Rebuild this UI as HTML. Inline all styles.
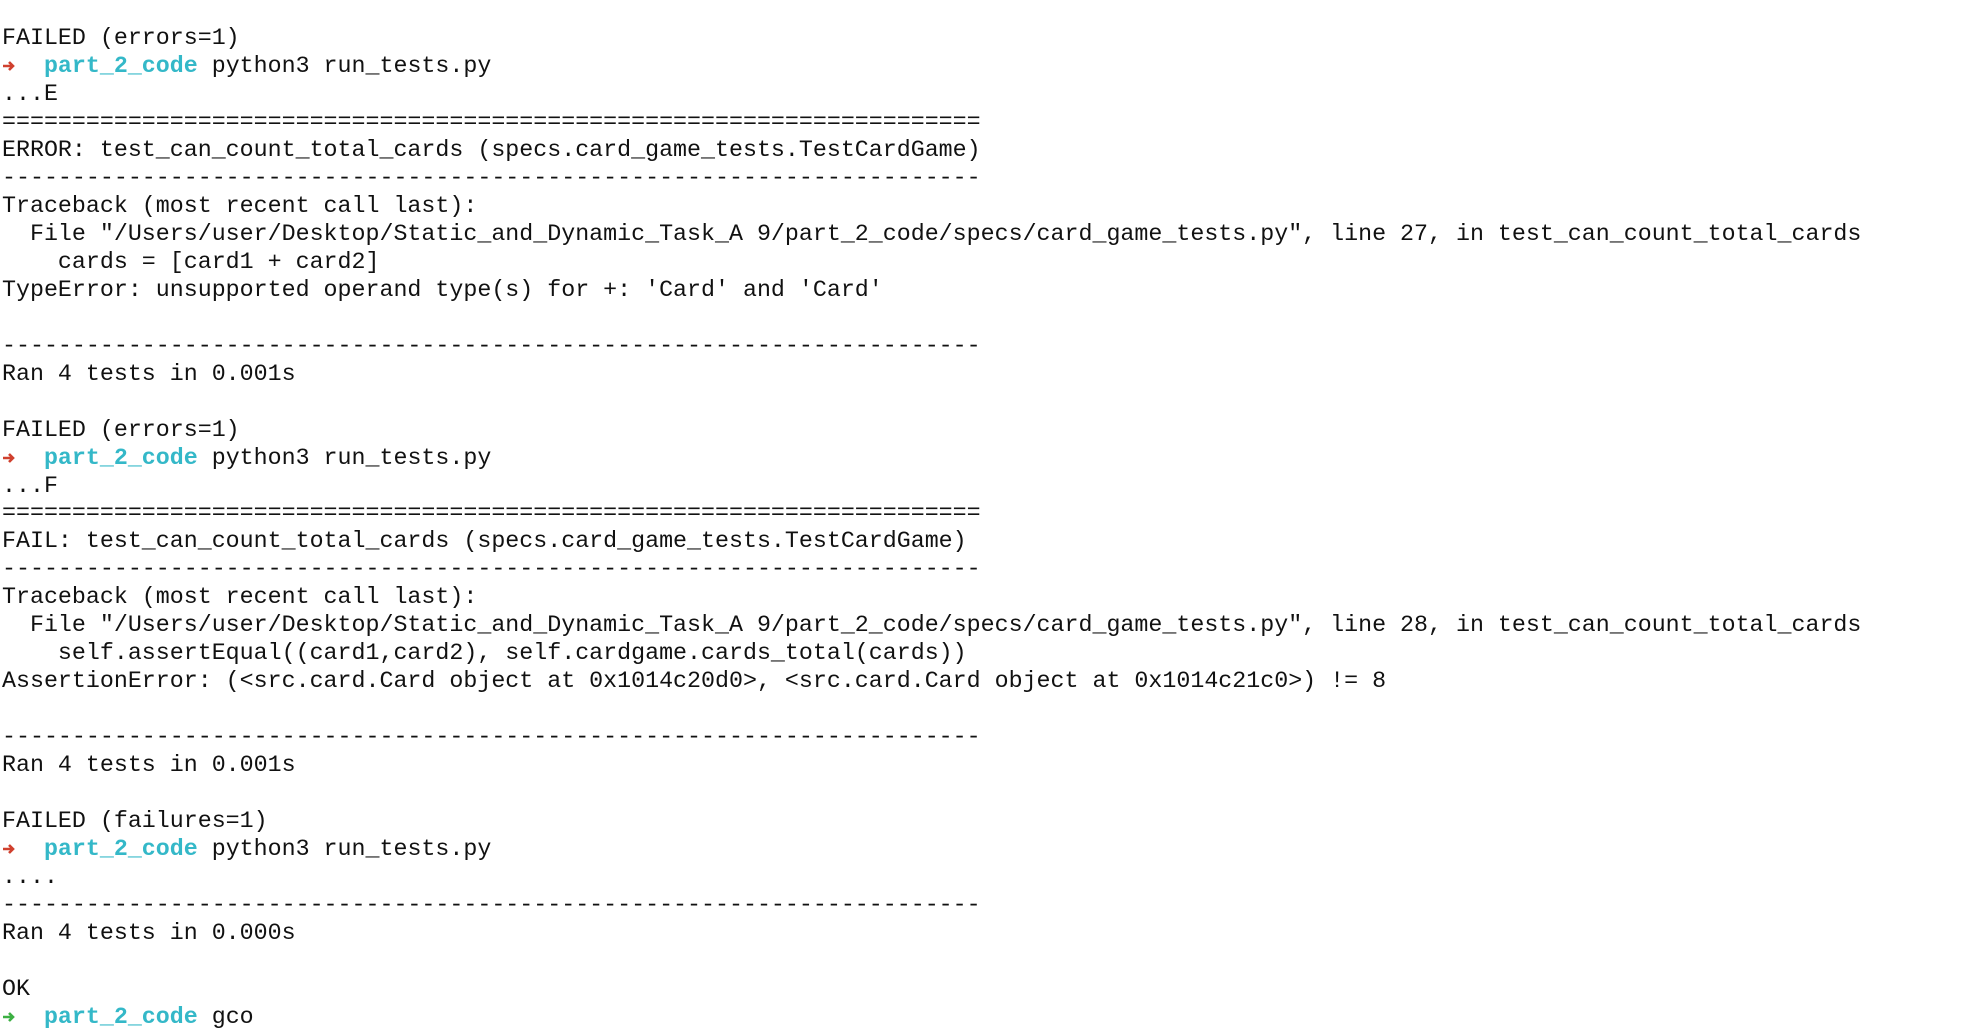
<!DOCTYPE html>
<html><head><meta charset="utf-8"><style>
html,body{margin:0;padding:0;background:#fff;width:1976px;height:1016px;overflow:hidden}
pre{margin:0;position:absolute;left:2px;top:25px;font-family:"Liberation Mono",monospace;font-size:23.3px;line-height:27.97px;color:#111;white-space:pre}
.a{display:inline-block;width:1ch;height:10px;vertical-align:baseline;position:relative}
.a svg{position:absolute;left:0;top:-2px}
.c{color:#34b8c8;font-weight:bold}
</style></head><body><pre>FAILED (errors=1)
<span class="a"><svg width="14" height="12" viewBox="0 0 14 12"><path d="M1 6H11M7 2L11 6L7 10" stroke="#d0402e" stroke-width="2.6" fill="none"/></svg></span>  <span class="c">part_2_code</span> python3 run_tests.py
...E
======================================================================
ERROR: test_can_count_total_cards (specs.card_game_tests.TestCardGame)
----------------------------------------------------------------------
Traceback (most recent call last):
  File "/Users/user/Desktop/Static_and_Dynamic_Task_A 9/part_2_code/specs/card_game_tests.py", line 27, in test_can_count_total_cards
    cards = [card1 + card2]
TypeError: unsupported operand type(s) for +: 'Card' and 'Card'

----------------------------------------------------------------------
Ran 4 tests in 0.001s

FAILED (errors=1)
<span class="a"><svg width="14" height="12" viewBox="0 0 14 12"><path d="M1 6H11M7 2L11 6L7 10" stroke="#d0402e" stroke-width="2.6" fill="none"/></svg></span>  <span class="c">part_2_code</span> python3 run_tests.py
...F
======================================================================
FAIL: test_can_count_total_cards (specs.card_game_tests.TestCardGame)
----------------------------------------------------------------------
Traceback (most recent call last):
  File "/Users/user/Desktop/Static_and_Dynamic_Task_A 9/part_2_code/specs/card_game_tests.py", line 28, in test_can_count_total_cards
    self.assertEqual((card1,card2), self.cardgame.cards_total(cards))
AssertionError: (&lt;src.card.Card object at 0x1014c20d0&gt;, &lt;src.card.Card object at 0x1014c21c0&gt;) != 8

----------------------------------------------------------------------
Ran 4 tests in 0.001s

FAILED (failures=1)
<span class="a"><svg width="14" height="12" viewBox="0 0 14 12"><path d="M1 6H11M7 2L11 6L7 10" stroke="#d0402e" stroke-width="2.6" fill="none"/></svg></span>  <span class="c">part_2_code</span> python3 run_tests.py
....
----------------------------------------------------------------------
Ran 4 tests in 0.000s

OK
<span class="a"><svg width="14" height="12" viewBox="0 0 14 12"><path d="M1 6H11M7 2L11 6L7 10" stroke="#3cb043" stroke-width="2.6" fill="none"/></svg></span>  <span class="c">part_2_code</span> gco</pre></body></html>
